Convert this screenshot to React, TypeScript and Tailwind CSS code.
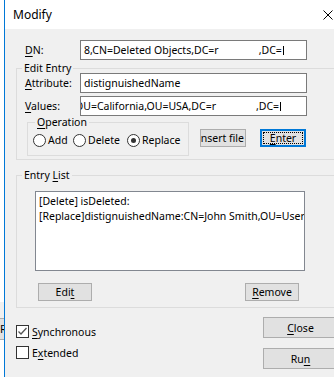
import type { ReactNode } from "react";

function U({ children }: { children: ReactNode }) {
  return <span className="underline underline-offset-[2px] decoration-[1px]">{children}</span>;
}

function TextBox({ children }: { children: ReactNode }) {
  return (
    <div className="w-[227px] h-[20px] border border-[#7a7a7a] bg-white flex items-center pl-[3px] overflow-hidden whitespace-nowrap">
      {children}
    </div>
  );
}

function Radio({ label, checked, width }: { label: string; checked?: boolean; width: string }) {
  return (
    <div className={`flex items-center gap-[2px] ${width}`}>
      <div className="w-[13px] h-[13px] rounded-full border border-[#333] bg-white flex items-center justify-center shrink-0">
        {checked && <div className="w-[5px] h-[5px] rounded-full bg-[#333]" />}
      </div>
      <span>{label}</span>
    </div>
  );
}

function Check({ checked, children }: { checked?: boolean; children: ReactNode }) {
  return (
    <div className="flex items-center gap-[3px] h-[13px]">
      <div className="w-[13px] h-[13px] border border-[#333] bg-white shrink-0 flex items-center justify-center">
        {checked && (
          <svg width="11" height="11" viewBox="0 0 11 11">
            <polyline points="1.5,5.5 4,8 9.5,2" fill="none" stroke="#555" strokeWidth="1.3" />
          </svg>
        )}
      </div>
      <span>{children}</span>
    </div>
  );
}

const btn = "bg-[#e1e1e1] border border-[#adadad] flex items-center justify-center whitespace-nowrap overflow-hidden";

export default function App() {
  return (
    <div className="w-[334px] h-[377px] overflow-hidden flex bg-white text-black text-[10.5px] leading-[14px] font-['Noto_Sans','Segoe_UI',sans-serif]">
      {/* strip of what lies behind the dialog */}
      <div className="w-[4px] shrink-0 flex flex-col">
        <div className="h-[302px] bg-white" />
        <div className="h-[16px] bg-[#f0f0f0]" />
        <div className="h-[22px] bg-[#e1e1e1] border-y border-[#adadad] overflow-hidden flex items-center text-[11px]">
          <span>R</span>
        </div>
        <div className="flex-1 bg-white" />
      </div>

      <div className="w-[346px] shrink-0 border-l border-[#0078d7] flex flex-col">
        {/* title bar */}
        <div className="h-[29px] bg-white flex items-center pl-[8px] pr-[17px]">
          <span className="flex-1 text-[12px] mt-[1px]">Modify</span>
          <svg width="10" height="10" viewBox="0 0 10 10">
            <path d="M0.5 0.5 L9.5 9.5 M9.5 0.5 L0.5 9.5" stroke="#000" strokeWidth="1" />
          </svg>
        </div>

        <div className="flex-1 bg-[#f0f0f0] flex flex-col">
          {/* DN */}
          <div className="flex items-center mt-[11px] ml-[20px]">
            <span className="w-[55px]">
              <U>D</U>N:
            </span>
            <TextBox>
              <span>8,CN=Deleted Objects,DC=r</span>
              <span className="inline-block w-[40px]" />
              <span>,DC=</span>
              <span className="inline-block w-[1px] h-[9px] bg-black ml-[1px]" />
            </TextBox>
          </div>

          {/* Edit Entry */}
          <fieldset className="mt-[3px] ml-[11px] w-[330px] border border-[#dcdcdc] pb-[3px]">
            <legend className="ml-[5px] px-[2px] leading-[10px]">Edit Entry</legend>
            <div className="flex items-center ml-[8px]">
              <span className="w-[55px]">
                <U>A</U>ttribute:
              </span>
              <TextBox>distignuishedName</TextBox>
            </div>
            <div className="flex items-center ml-[8px] mt-[3px]">
              <span className="w-[55px]">
                <U>V</U>alues:
              </span>
              <TextBox>
                <span className="-ml-[9px]">OU=California,OU=USA,DC=r</span>
                <span className="inline-block w-[40px]" />
                <span>,DC=</span>
                <span className="inline-block w-[1px] h-[9px] bg-black ml-[1px]" />
              </TextBox>
            </div>
            <div className="flex items-start mt-[1px] ml-[10px]">
              <fieldset className="w-[162px] border border-[#dcdcdc] pl-[5px] pb-[8px]">
                <legend className="ml-[2px] px-[2px] leading-[10px]">
                  <U>O</U>peration
                </legend>
                <div className="flex items-center mt-[6px]">
                  <Radio label="Add" width="w-[40px]" />
                  <Radio label="Delete" width="w-[54px]" />
                  <Radio label="Replace" checked width="w-[56px]" />
                </div>
              </fieldset>
              <div className={`${btn} w-[46px] h-[18px] mt-[12px] ml-[11px] justify-end pr-[1px]`}>
                <span>
                  <U>I</U>nsert file
                </span>
              </div>
              <div className="w-[46px] h-[18px] mt-[12px] ml-[14px] bg-[#e1e1e1] border-2 border-[#0078d7] p-[1px]">
                <div className="w-full h-full border border-dotted border-black flex items-center justify-center">
                  <span>
                    <U>E</U>nter
                  </span>
                </div>
              </div>
            </div>
          </fieldset>

          {/* Entry List */}
          <fieldset className="mt-[10px] ml-[11px] w-[330px] border border-[#dcdcdc] pb-[6px]">
            <legend className="ml-[5px] px-[2px] leading-[10px]">
              Entry <U>L</U>ist
            </legend>
            <div className="ml-[18px] mt-[11px] w-[270px] h-[80px] border border-[#828790] bg-white overflow-hidden whitespace-nowrap pl-[3px] pt-[2px] leading-[15px]">
              <div>[Delete] isDeleted:</div>
              <div>[Replace]distignuishedName:CN=John Smith,OU=Users,OU=California</div>
            </div>
            <div className="flex mt-[12px] ml-[21px]">
              <div className={`${btn} w-[54px] h-[18px]`}>
                <span>
                  Edi<U>t</U>
                </span>
              </div>
              <div className={`${btn} w-[54px] h-[18px] ml-[153px]`}>
                <span>
                  <U>R</U>emove
                </span>
              </div>
            </div>
          </fieldset>

          {/* bottom */}
          <div className="flex pl-[11px]">
            <div className="w-[247px] flex flex-col gap-[8px] mt-[17px]">
              <Check checked>
                <U>S</U>ynchronous
              </Check>
              <Check>
                E<U>x</U>tended
              </Check>
            </div>
            <div className="flex flex-col gap-[10px] mt-[9px]">
              <div className={`${btn} w-[75px] h-[21px]`}>
                <span>
                  <U>C</U>lose
                </span>
              </div>
              <div className={`${btn} w-[75px] h-[21px]`}>
                <span>
                  Ru<U>n</U>
                </span>
              </div>
            </div>
          </div>
        </div>
      </div>
    </div>
  );
}
